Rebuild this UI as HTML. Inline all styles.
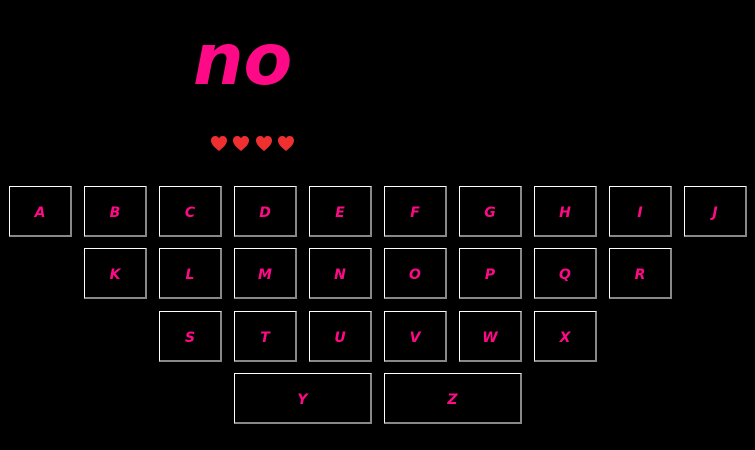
<!DOCTYPE html>
<html><head><style>
html,body{margin:0;padding:0;background:#000;width:755px;height:450px;overflow:hidden}
.t{position:absolute;left:193px;top:18px;font:bold oblique 71px "DejaVu Sans",sans-serif;color:#ff0a86;line-height:84px}
.h{position:absolute;top:136px}
.b{position:absolute;width:60px;height:45px;padding-top:3px;border:solid;border-color:#fff #888 #888 #fff;border-width:1px 2px 2px 1px;box-sizing:content-box;color:#ff0a86;font:bold oblique 14px "DejaVu Sans",sans-serif;display:flex;align-items:center;justify-content:center}
</style></head><body>
<div class="t">no</div>
<svg class="h" style="left:211px" width="90" height="16" viewBox="0 0 90 16">
<defs><path id="hh" d="M8 15 C3 11 0 8 0 4.5 C0 1.5 2.2 0 4.3 0 C6 0 7.3 1 8 2.3 C8.7 1 10 0 11.7 0 C13.8 0 16 1.5 16 4.5 C16 8 13 11 8 15Z" fill="#f03030"/></defs>
<use href="#hh" x="0"/><use href="#hh" x="22"/><use href="#hh" x="45"/><use href="#hh" x="67"/>
</svg>
<div class="b" style="left:9px;top:186px">A</div>
<div class="b" style="left:84px;top:186px">B</div>
<div class="b" style="left:159px;top:186px">C</div>
<div class="b" style="left:234px;top:186px">D</div>
<div class="b" style="left:309px;top:186px">E</div>
<div class="b" style="left:384px;top:186px">F</div>
<div class="b" style="left:459px;top:186px">G</div>
<div class="b" style="left:534px;top:186px">H</div>
<div class="b" style="left:609px;top:186px">I</div>
<div class="b" style="left:684px;top:186px">J</div>
<div class="b" style="left:84px;top:248px">K</div>
<div class="b" style="left:159px;top:248px">L</div>
<div class="b" style="left:234px;top:248px">M</div>
<div class="b" style="left:309px;top:248px">N</div>
<div class="b" style="left:384px;top:248px">O</div>
<div class="b" style="left:459px;top:248px">P</div>
<div class="b" style="left:534px;top:248px">Q</div>
<div class="b" style="left:609px;top:248px">R</div>
<div class="b" style="left:159px;top:311px">S</div>
<div class="b" style="left:234px;top:311px">T</div>
<div class="b" style="left:309px;top:311px">U</div>
<div class="b" style="left:384px;top:311px">V</div>
<div class="b" style="left:459px;top:311px">W</div>
<div class="b" style="left:534px;top:311px">X</div>
<div class="b" style="left:234px;top:373px;width:135px">Y</div>
<div class="b" style="left:384px;top:373px;width:135px">Z</div>
</body></html>
